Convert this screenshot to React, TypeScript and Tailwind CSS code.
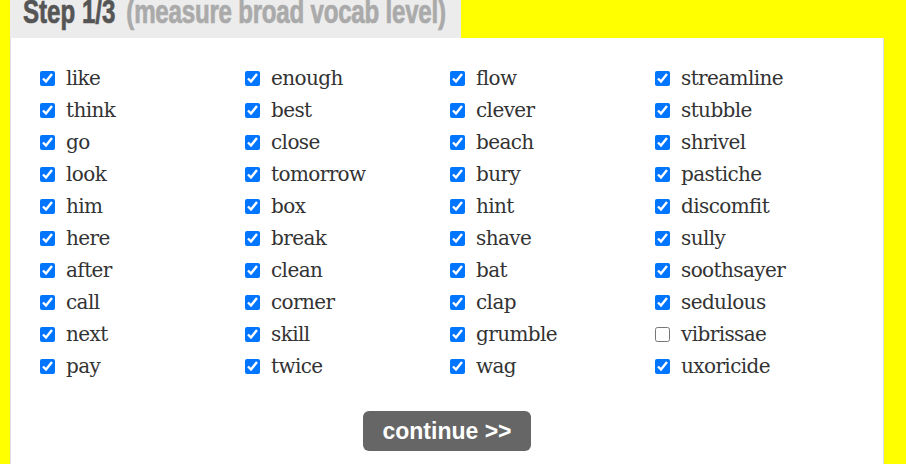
const COLUMNS: [string, boolean][][] = [
  [['like', true], ['think', true], ['go', true], ['look', true], ['him', true], ['here', true], ['after', true], ['call', true], ['next', true], ['pay', true]],
  [['enough', true], ['best', true], ['close', true], ['tomorrow', true], ['box', true], ['break', true], ['clean', true], ['corner', true], ['skill', true], ['twice', true]],
  [['flow', true], ['clever', true], ['beach', true], ['bury', true], ['hint', true], ['shave', true], ['bat', true], ['clap', true], ['grumble', true], ['wag', true]],
  [['streamline', true], ['stubble', true], ['shrivel', true], ['pastiche', true], ['discomfit', true], ['sully', true], ['soothsayer', true], ['sedulous', true], ['vibrissae', false], ['uxoricide', true]],
];

function WordBox({ word, checked }: { word: string; checked: boolean }) {
  return (
    <label className="flex items-center h-[32px] gap-[11px]">
      <input type="checkbox" defaultChecked={checked} className="w-[15px] h-[15px] m-0" />
      <span className="text-[20px] text-[#333] font-['DejaVu_Serif','Liberation_Serif',serif] tracking-[-0.6px]">{word}</span>
    </label>
  );
}

export default function App() {
  return (
    <div className="w-[906px] h-[464px] bg-[#ffff00] overflow-hidden pl-[10px] pr-[22px]">
      {/* tab header, top is cut off by the scroll */}
      <div className="w-[451px] h-[38px] bg-[#ececec] overflow-hidden flex items-end pl-[13px] pb-[10px]">
        <div className="origin-bottom-left scale-x-[0.73] flex items-baseline gap-[15px] whitespace-nowrap leading-none font-['Impact','Liberation_Sans',sans-serif] font-bold text-[33px] [-webkit-text-stroke:0.7px]">
          <span className="text-[#555]">Step 1/3</span>
          <span className="text-[#aaa] tracking-[-0.3px]">(measure broad vocab level)</span>
        </div>
      </div>

      <div className="bg-white border-x border-[#d8dde6] h-[460px] pt-[24px] pl-[29px]">
        <div className="grid grid-cols-[205px_205px_205px_205px]">
          {COLUMNS.map((col, i) => (
            <div key={i} className="flex flex-col">
              {col.map(([w, c]) => (
                <WordBox key={w} word={w} checked={c} />
              ))}
            </div>
          ))}
        </div>

        <div className="flex justify-center pr-[29px] mt-[29px]">
          <button className="h-[40px] px-[19px] rounded-[6px] bg-[#666] text-white font-bold text-[23px] font-['Liberation_Sans',Arial,sans-serif]">
            continue &gt;&gt;
          </button>
        </div>
      </div>
    </div>
  );
}
